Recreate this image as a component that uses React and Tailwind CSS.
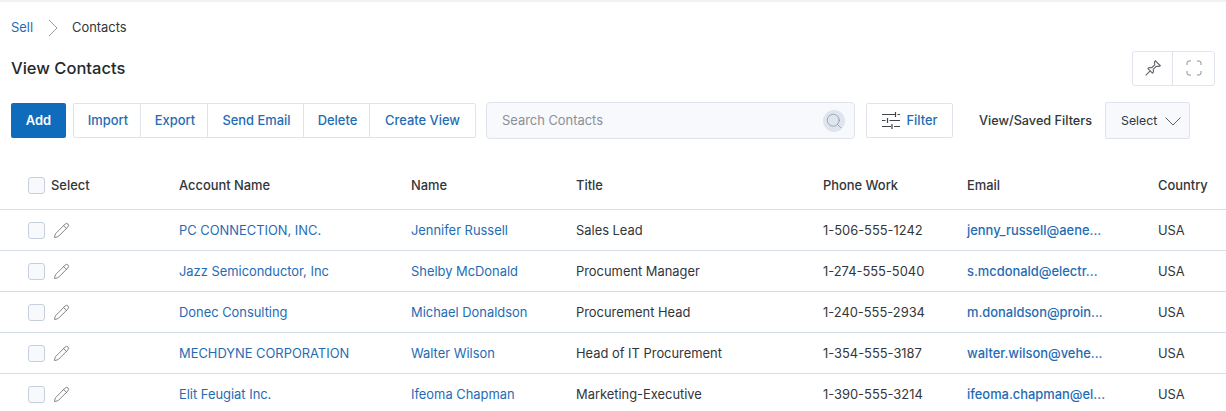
import React from 'react';
import { Pencil, Search } from 'lucide-react';

const actions = [
  { label: 'Import', width: 'w-[66px] pl-[2px]' },
  { label: 'Export', width: 'w-[67px] pl-[2px]' },
  { label: 'Send Email', width: 'w-[96px] pl-[2px]' },
  { label: 'Delete', width: 'w-[66px] pl-[2px]' },
  { label: 'Create View', width: 'w-[106px]' },
];

const contacts = [
  { account: 'PC CONNECTION, INC.', name: 'Jennifer Russell', title: 'Sales Lead', phone: '1-506-555-1242', email: 'jenny_russell@aene...' },
  { account: 'Jazz Semiconductor, Inc', name: 'Shelby McDonald', title: 'Procument Manager', phone: '1-274-555-5040', email: 's.mcdonald@electr...' },
  { account: 'Donec Consulting', name: 'Michael Donaldson', title: 'Procurement Head', phone: '1-240-555-2934', email: 'm.donaldson@proin...' },
  { account: 'MECHDYNE CORPORATION', name: 'Walter Wilson', title: 'Head of IT Procurement', phone: '1-354-555-3187', email: 'walter.wilson@vehe...' },
  { account: 'Elit Feugiat Inc.', name: 'Ifeoma Chapman', title: 'Marketing-Executive', phone: '1-390-555-3214', email: 'ifeoma.chapman@el...' },
];

const rowGrid = 'grid grid-cols-[151px_232px_165px_247px_144px_191px_1fr] pl-7 items-center';

const Checkbox = () => (
  <span className="block w-[17px] h-[17px] rounded-[3px] border border-[#c5cfdd] bg-[#f7f9fc]" />
);

const App = () => {
  return (
    <div className="h-[411px] w-[1226px] overflow-hidden bg-white font-['Inter',sans-serif] text-[12.9px] text-[#32363a]">
      <div className="h-[2px] bg-[#f0f1f5]" />

      {/* Breadcrumb */}
      <div className="flex items-center h-[18px] mt-[17px] pl-[11px]">
        <a className="text-[#1f6cb5]">Sell</a>
        <svg width="10" height="18" viewBox="0 0 10 18" fill="none" stroke="#8a9098" strokeWidth="0.9" className="ml-[15px] mr-[14px]">
          <path d="M1 1l8 8-8 8" />
        </svg>
        <span>Contacts</span>
      </div>

      {/* Title */}
      <div className="flex items-center justify-between mt-[13px] pl-[11px] pr-[11px] h-[36px]">
        <h1 className="text-[16.5px] font-medium text-[#26292c]">View Contacts</h1>
        <div className="flex h-[35px] rounded-[3px] border border-[#e0e5ee] text-[#5f656c]">
          <button className="w-[40px] flex items-center justify-center border-r border-[#dfe4ec]">
            <svg width="18" height="18" viewBox="0 0 16 16" fill="none" stroke="currentColor" strokeWidth="1" strokeLinejoin="round">
              <path d="M10 1.5L14.5 6l-1.2.6-2.5-.1-2.6 2.7.2 2.4-.9.9-4-4 .9-.9 2.4.2 2.7-2.6-.1-2.5zM5.5 10.5l-4 4" />
            </svg>
          </button>
          <button className="w-[41px] flex items-center justify-center">
            <svg width="16" height="16" viewBox="0 0 16 16" fill="none" stroke="#8a9098" strokeWidth="1">
              <path d="M1 5V3a2 2 0 0 1 2-2h2M11 1h2a2 2 0 0 1 2 2v2M15 11v2a2 2 0 0 1-2 2h-2M5 15H3a2 2 0 0 1-2-2v-2" />
            </svg>
          </button>
        </div>
      </div>

      {/* Toolbar */}
      <div className="flex items-center mt-[16px] pl-[11px] h-[37px]">
        <button className="w-[55px] h-[35px] rounded-[2px] bg-[#0f6cbd] text-white font-semibold">Add</button>
        <div className="flex h-[35px] ml-[7px] rounded-[2px] border border-[#dfe4ec] text-[#1f6cb5] font-medium">
          {actions.map((action) => (
            <button key={action.label} className={`${action.width} border-l border-[#dfe4ec] first:border-l-0`}>
              {action.label}
            </button>
          ))}
        </div>
        <div className="flex items-center justify-between w-[369px] h-[37px] ml-[10px] pl-[15px] pr-[9px] rounded-[4px] border border-[#dfe4ec] bg-[#f7f9fc] text-[#8b9097]">
          <span>Search Contacts</span>
          <span className="w-[22px] h-[22px] rounded-full bg-[#dfe5ee] flex items-center justify-center">
            <Search size={18} strokeWidth={1} className="text-[#8a9098]" />
          </span>
        </div>
        <button className="flex items-center justify-center gap-[6px] w-[87px] h-[35px] ml-[11px] pl-[1px] rounded-[2px] border border-[#dfe4ec] text-[#1f6cb5] font-medium">
          <svg width="18" height="17" viewBox="0 0 18 17" fill="none" stroke="#3f4449" strokeWidth="1.2">
            <path d="M0 2.5h13M13.5 0v5M15.5 2.5H18M0 8.5h3.5M5.5 6v5M7.5 8.5H18M0 14.5h9M10 12v5M12 14.5h6" />
          </svg>
          Filter
        </button>
        <span className="ml-[26px] text-[12.7px] font-medium text-[#32363a]">View/Saved Filters</span>
        <button className="flex items-center justify-between w-[85px] h-[37px] ml-[13px] pl-[15px] pr-[8px] pt-[2px] rounded-[2px] border border-[#dfe4ec] bg-[#f7f9fc] text-[12.3px]">
          Select
          <svg width="16" height="9" viewBox="0 0 16 9" fill="none" stroke="#4a4f55" strokeWidth="0.9">
            <path d="M.5.5L8 8l7.5-7.5" />
          </svg>
        </button>
      </div>

      {/* Table */}
      <div className={`${rowGrid} h-[48px] mt-[23px] border-b border-[#d5dde9] font-medium text-[#32363a]`}>
        <div className="flex items-center gap-[6px]">
          <Checkbox />
          <span>Select</span>
        </div>
        <span>Account Name</span>
        <span>Name</span>
        <span>Title</span>
        <span>Phone Work</span>
        <span>Email</span>
        <span>Country</span>
      </div>
      {contacts.map((contact) => (
        <div key={contact.phone} className={`${rowGrid} h-[41px] pt-[2px] border-b border-[#d5dde9]`}>
          <div className="flex items-center gap-[8px] -mt-[2px]">
            <Checkbox />
            <Pencil size={17} strokeWidth={1.1} className="text-[#5f656c]" />
          </div>
          <a className="text-[#1f6cb5]">{contact.account}</a>
          <a className="text-[#1f6cb5]">{contact.name}</a>
          <span>{contact.title}</span>
          <span>{contact.phone}</span>
          <a className="text-[#1f6cb5] font-medium">{contact.email}</a>
          <span>USA</span>
        </div>
      ))}
    </div>
  );
};

export default App;
